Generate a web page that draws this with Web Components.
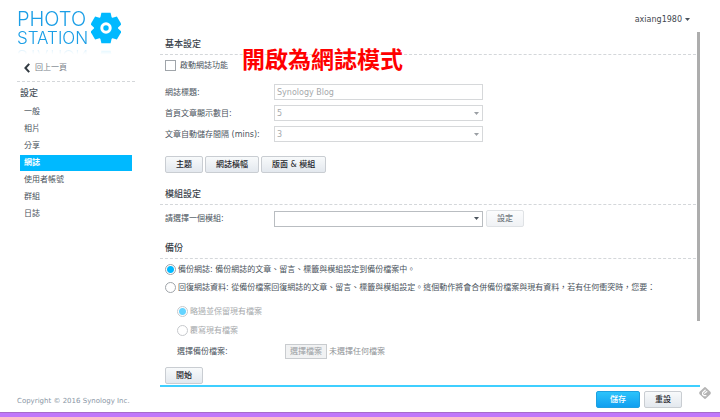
<!DOCTYPE html>
<html lang="zh-Hant">
<head>
<meta charset="utf-8">
<title>Photo Station</title>
<style>
html, body {
  margin: 0;
  height: 100%;
}

body {
  background: #fff;
  color: #4a535c;
  font: 8px/11px "DejaVu Sans", "Noto Sans CJK TC", sans-serif;
  --accent: #00b9ff;
  --line: #d4d7da;
}
</style>
</head>
<body>

<station-shell>
  <station-logo slot="side"></station-logo>
  <back-link slot="side" href="#albums">回上一頁</back-link>
  <side-menu slot="side" heading="設定">
    <menu-entry href="#general">一般</menu-entry>
    <menu-entry href="#photos">相片</menu-entry>
    <menu-entry href="#sharing">分享</menu-entry>
    <menu-entry href="#blog" active>網誌</menu-entry>
    <menu-entry href="#accounts">使用者帳號</menu-entry>
    <menu-entry href="#groups">群組</menu-entry>
    <menu-entry href="#logs">日誌</menu-entry>
  </side-menu>
  <span slot="copyright">Copyright © 2016 Synology Inc.</span>

  <user-menu slot="user">axiang1980</user-menu>

  <settings-section heading="基本設定">
    <check-option kind="checkbox">啟動網誌功能</check-option>
    <field-list>
      <form-field label="網誌標題:" value="Synology Blog" disabled></form-field>
      <form-field kind="select" label="首頁文章顯示數目:" value="5" disabled></form-field>
      <form-field kind="select" label="文章自動儲存間隔 (mins):" value="3" disabled></form-field>
    </field-list>
    <button-row>
      <push-button>主題</push-button>
      <push-button>網誌橫幅</push-button>
      <push-button>版面 &amp; 模組</push-button>
    </button-row>
  </settings-section>

  <settings-section heading="模組設定">
    <form-field kind="select" label="請選擇一個模組:" value="">
      <push-button disabled>設定</push-button>
    </form-field>
  </settings-section>

  <settings-section heading="備份">
    <option-group>
      <check-option kind="radio" checked>備份網誌: 備份網誌的文章、留言、標籤與模組設定到備份檔案中。</check-option>
      <check-option kind="radio">回復網誌資料: 從備份檔案回復網誌的文章、留言、標籤與模組設定。這個動作將會合併備份檔案與現有資料，若有任何衝突時，您要：</check-option>
    </option-group>
    <option-group nested>
      <check-option kind="radio" checked disabled>略過並保留現有檔案</check-option>
      <check-option kind="radio" disabled>覆寫現有檔案</check-option>
      <file-field label="選擇備份檔案:"></file-field>
    </option-group>
    <button-row slot="end">
      <push-button>開始</push-button>
    </button-row>
  </settings-section>

  <push-button slot="actions" primary>儲存</push-button>
  <push-button slot="actions">重設</push-button>
  <page-note slot="overlay">開啟為網誌模式</page-note>
  <feed-badge slot="overlay"></feed-badge>
</station-shell>

<script>
// small helper: every element gets an open root filled from its own markup
class BaseElement extends HTMLElement {
  constructor() {
    super();
    this._root = this.attachShadow({mode: 'open'});
  }

  connectedCallback() {
    if (!this._root.firstChild) {
      this._root.innerHTML = this.render();
      this.ready();
    }
  }

  attr(name) {
    return this.getAttribute(name) || '';
  }

  flag(name) {
    return this.hasAttribute(name) ? name : '';
  }

  ready() {}
}

class StationShell extends BaseElement {
  render() {
    return `
      <style>
        :host {
          display: grid;
          grid-template-columns: 160px minmax(0, 1fr);
          grid-template-rows: 1fr auto;
          min-height: 100%;
          position: relative;
        }
        aside {
          display: flex;
          flex-direction: column;
          padding: 9px 25px 5px 17px;
        }
        small {
          margin-top: auto;
          font-size: 7px;
          color: #8a96a5;
          white-space: nowrap;
        }
        main {
          display: flex;
          flex-direction: column;
          padding-right: 20px;
        }
        header {
          box-sizing: border-box;
          height: 32px;
          padding: 6px 10px 0 0;
          display: flex;
          justify-content: flex-end;
          align-items: center;
        }
        .pane {
          flex: 1;
          display: grid;
          grid-template-columns: minmax(0, 1fr) 3px;
          column-gap: 1px;
        }
        .content {
          display: flex;
          flex-direction: column;
          gap: 15px;
          padding: 6px 0 1px;
        }
        .thumb {
          height: 82%;
          background: #adadad;
        }
        footer {
          display: flex;
          justify-content: flex-end;
          gap: 4px;
          padding: 4px 18px 4px 0;
          border-top: 2px solid #3fcfff;
        }
        .strip {
          grid-column: 1 / -1;
          height: 4px;
          background: #c077fa;
          border-top: 1px solid #a66bc9;
        }
      </style>
      <aside>
        <slot name="side"></slot>
        <small><slot name="copyright"></slot></small>
      </aside>
      <main>
        <header><slot name="user"></slot></header>
        <div class="pane">
          <div class="content"><slot></slot></div>
          <div class="thumb"></div>
        </div>
        <footer><slot name="actions"></slot></footer>
      </main>
      <div class="strip"></div>
      <slot name="overlay"></slot>
    `;
  }
}

class StationLogo extends BaseElement {
  render() {
    return `
      <style>
        :host {
          display: flex;
          align-items: center;
          gap: 3px;
          -webkit-box-reflect: below 0 linear-gradient(transparent 80%, rgba(0, 0, 0, .2));
        }
        .name {
          color: #1a9ee6;
          font-family: Inter, "Liberation Sans", sans-serif;
          font-weight: 300;
          font-size: 20px;
          line-height: 20px;
        }
        .name span {
          display: block;
        }
        .name .second {
          font-size: 17px;
          line-height: 18px;
        }
        svg {
          display: block;
          flex: none;
        }
      </style>
      <div class="name"><span>PHOTO</span><span class="second">STATION</span></div>
      <svg width="30" height="32" viewBox="-15 -16 30 32">
        <g fill="#00b9ff">
          <circle r="12"/>
          <path id="t" d="M-6 -9 L-4.6 -15.2 H4.6 L6 -9 V9 L4.6 15.2 H-4.6 L-6 9Z"/>
          <use href="#t" transform="rotate(60)"/>
          <use href="#t" transform="rotate(120)"/>
        </g>
        <circle r="4.2" fill="#00b9ff" stroke="#fff" stroke-width="3"/>
      </svg>
    `;
  }
}

class BackLink extends BaseElement {
  render() {
    return `
      <style>
        :host {
          display: block;
          margin-top: 13px;
          padding: 2px 0 8px 7px;
          border-bottom: 1px dashed var(--line);
        }
        a {
          display: flex;
          align-items: center;
          gap: 5px;
          color: #7a828a;
          text-decoration: none;
        }
      </style>
      <a href="${this.attr('href')}">
        <svg width="6" height="10" viewBox="0 0 6 10" fill="none" stroke="#333b42" stroke-width="2"><path d="M5.2 .8 L1.4 5 L5.2 9.2"/></svg>
        <slot></slot>
      </a>
    `;
  }
}

class SideMenu extends BaseElement {
  render() {
    return `
      <style>
        :host {
          display: block;
          padding: 5px 3px;
        }
        h2 {
          margin: 0 0 5px;
          font-size: 9px;
          line-height: 12px;
          font-weight: 500;
        }
        nav {
          display: flex;
          flex-direction: column;
          gap: 1px;
        }
      </style>
      <h2>${this.attr('heading')}</h2>
      <nav><slot></slot></nav>
    `;
  }
}

class MenuEntry extends BaseElement {
  render() {
    return `
      <style>
        :host {
          display: block;
        }
        a {
          display: block;
          padding-left: 4px;
          line-height: 16px;
          color: inherit;
          text-decoration: none;
        }
        :host([active]) a {
          background: var(--accent);
          color: #fff;
          font-weight: bold;
        }
      </style>
      <a href="${this.attr('href')}"><slot></slot></a>
    `;
  }
}

class UserMenu extends BaseElement {
  render() {
    return `
      <style>
        :host {
          display: block;
        }
        button {
          display: flex;
          align-items: center;
          gap: 3px;
          padding: 0;
          border: 0;
          background: none;
          font: inherit;
          color: #3f474f;
        }
      </style>
      <button type="button"><slot></slot><svg width="5" height="3"><path d="M0 0H5L2.5 3Z" fill="#4a535c"/></svg></button>
    `;
  }
}

class SettingsSection extends BaseElement {
  render() {
    return `
      <style>
        :host {
          display: block;
        }
        h2 {
          margin: 0;
          padding: 0 5px 4px;
          border-bottom: 1px dashed var(--line);
          font-size: 9px;
          line-height: 12px;
          font-weight: 500;
          color: #39424b;
        }
        .body {
          display: flex;
          flex-direction: column;
          gap: 13px;
          padding: 5px 0 0 5px;
        }
        .end {
          padding: 8px 0 0 5px;
        }
      </style>
      <h2>${this.attr('heading')}</h2>
      <div class="body"><slot></slot></div>
      ${this.querySelector('[slot=end]') ? '<div class="end"><slot name="end"></slot></div>' : ''}
    `;
  }
}

class FieldList extends BaseElement {
  render() {
    return `
      <style>
        :host {
          display: flex;
          flex-direction: column;
          gap: 5px;
          padding-bottom: 1px;
        }
      </style>
      <slot></slot>
    `;
  }
}

class FormField extends BaseElement {
  render() {
    const control = this.attr('kind') === 'select'
      ? `<select id="f" ${this.flag('disabled')}><option>${this.attr('value')}</option></select>
         <svg width="5" height="3"><path d="M0 0H5L2.5 3Z"/></svg>`
      : `<input id="f" type="text" value="${this.attr('value')}" ${this.flag('disabled')}>`;

    return `
      <style>
        :host {
          display: grid;
          grid-template-columns: 109px minmax(0, 209px) auto;
          justify-content: start;
          align-items: center;
          --edge: #b9bdc1;
          --arrow: #4a535c;
        }
        :host([disabled]) {
          --edge: #d6d8da;
          --arrow: #9a9fa4;
        }
        .box {
          display: grid;
          align-items: center;
        }
        .box > * {
          grid-area: 1 / 1;
        }
        input, select {
          box-sizing: border-box;
          appearance: none;
          width: 100%;
          height: 16px;
          margin: 0;
          padding: 0 2px;
          border: 1px solid var(--edge);
          border-radius: 0;
          background: #fff;
          font: inherit;
          color: inherit;
        }
        :disabled {
          color: #a6a9ac;
          opacity: 1;
        }
        svg {
          justify-self: end;
          margin-right: 4px;
          fill: var(--arrow);
          pointer-events: none;
        }
        ::slotted(*) {
          margin-left: 3px;
        }
      </style>
      <label for="f">${this.attr('label')}</label>
      <div class="box">${control}</div>
      <slot></slot>
    `;
  }
}

class PushButton extends BaseElement {
  render() {
    return `
      <style>
        :host {
          display: block;
        }
        button {
          box-sizing: border-box;
          height: 17px;
          min-width: 37px;
          padding: 0 10px;
          border: 1px solid #c9cdd2;
          border-radius: 2px;
          background: linear-gradient(#f8fafb, #e3e8ee);
          font: inherit;
          font-weight: 500;
          color: #1f262d;
          white-space: nowrap;
        }
        button:disabled {
          border-color: #dfe2e5;
          background: linear-gradient(#fbfcfd, #f0f2f5);
          color: #747b82;
        }
        :host([primary]) button {
          min-width: 44px;
          border-color: #1ea0e0;
          background: linear-gradient(#2cc3fb, #109ff0);
          color: #fff;
        }
      </style>
      <button type="button" ${this.flag('disabled')}><slot></slot></button>
    `;
  }
}

class ButtonRow extends BaseElement {
  render() {
    return `
      <style>
        :host {
          display: flex;
          gap: 2px;
        }
      </style>
      <slot></slot>
    `;
  }
}

class CheckOption extends BaseElement {
  render() {
    return `
      <style>
        :host {
          display: block;
        }
        label {
          display: flex;
          align-items: center;
          gap: 2px;
          white-space: nowrap;
        }
        input {
          appearance: none;
          box-sizing: border-box;
          flex: none;
          width: 11px;
          height: 11px;
          margin: 0;
          border: 1px solid #a0a5aa;
          background: #fff;
        }
        input[type=checkbox] {
          margin-right: 2px;
        }
        input[type=radio] {
          border-radius: 50%;
        }
        input:checked {
          background: radial-gradient(circle, var(--accent) 3px, #fff 4px);
        }
        :host([disabled]) {
          color: #a6a9ac;
        }
        :host([disabled]) input {
          opacity: .6;
        }
      </style>
      <label><input type="${this.attr('kind')}" ${this.flag('checked')} ${this.flag('disabled')}><slot></slot></label>
    `;
  }

  get input() {
    return this._root.querySelector('input');
  }

  ready() {
    this.input.addEventListener('change', () => {
      this.dispatchEvent(new CustomEvent('pick', {bubbles: true}));
    });
  }
}

class OptionGroup extends BaseElement {
  render() {
    return `
      <style>
        :host {
          display: flex;
          flex-direction: column;
          gap: 7px;
        }
        :host([nested]) {
          gap: 8px;
          padding-left: 12px;
        }
      </style>
      <slot></slot>
    `;
  }

  // radios live in separate roots, so the group unchecks the others itself
  ready() {
    this.addEventListener('pick', (e) => {
      this.querySelectorAll('check-option').forEach((option) => {
        if (option !== e.target)
          option.input.checked = false;
      });
    });
  }
}

class FileField extends BaseElement {
  render() {
    return `
      <style>
        :host {
          display: grid;
          grid-template-columns: 106px auto auto;
          justify-content: start;
          align-items: center;
          column-gap: 2px;
        }
        button {
          box-sizing: border-box;
          height: 15px;
          padding: 0 4px;
          border: 1px solid #c9cccf;
          background: #f1f2f3;
          font: inherit;
          color: #9b9fa3;
        }
        span {
          color: #8f9397;
        }
      </style>
      <label for="pick">${this.attr('label')}</label>
      <button id="pick" type="button" disabled>選擇檔案</button>
      <span>未選擇任何檔案</span>
      <input type="file" hidden disabled>
    `;
  }
}

class PageNote extends BaseElement {
  render() {
    return `
      <style>
        :host {
          position: absolute;
          left: 242px;
          top: 45px;
          font: bold 23px/26px "Noto Sans CJK TC", sans-serif;
          color: #f00;
          white-space: nowrap;
        }
      </style>
      <slot></slot>
    `;
  }
}

class FeedBadge extends BaseElement {
  render() {
    return `
      <style>
        :host {
          position: absolute;
          right: 8px;
          bottom: 17px;
        }
        svg {
          display: block;
        }
      </style>
      <svg width="14" height="14" viewBox="0 0 14 14">
        <rect x="2.4" y="2.4" width="9.2" height="9.2" rx="1.6" transform="rotate(45 7 7)" fill="#b4b4b4"/>
        <path d="M7.6 3.8 L4.6 6.6 Q4 8.6 5.8 9.6 H8.4 M6.2 7.6 L9.2 5.2" stroke="#fff" stroke-width="1.2" fill="none"/>
      </svg>
    `;
  }
}

window.customElements.define('station-shell', StationShell);
window.customElements.define('station-logo', StationLogo);
window.customElements.define('back-link', BackLink);
window.customElements.define('side-menu', SideMenu);
window.customElements.define('menu-entry', MenuEntry);
window.customElements.define('user-menu', UserMenu);
window.customElements.define('settings-section', SettingsSection);
window.customElements.define('field-list', FieldList);
window.customElements.define('form-field', FormField);
window.customElements.define('push-button', PushButton);
window.customElements.define('button-row', ButtonRow);
window.customElements.define('check-option', CheckOption);
window.customElements.define('option-group', OptionGroup);
window.customElements.define('file-field', FileField);
window.customElements.define('page-note', PageNote);
window.customElements.define('feed-badge', FeedBadge);
</script>
</body>
</html>
